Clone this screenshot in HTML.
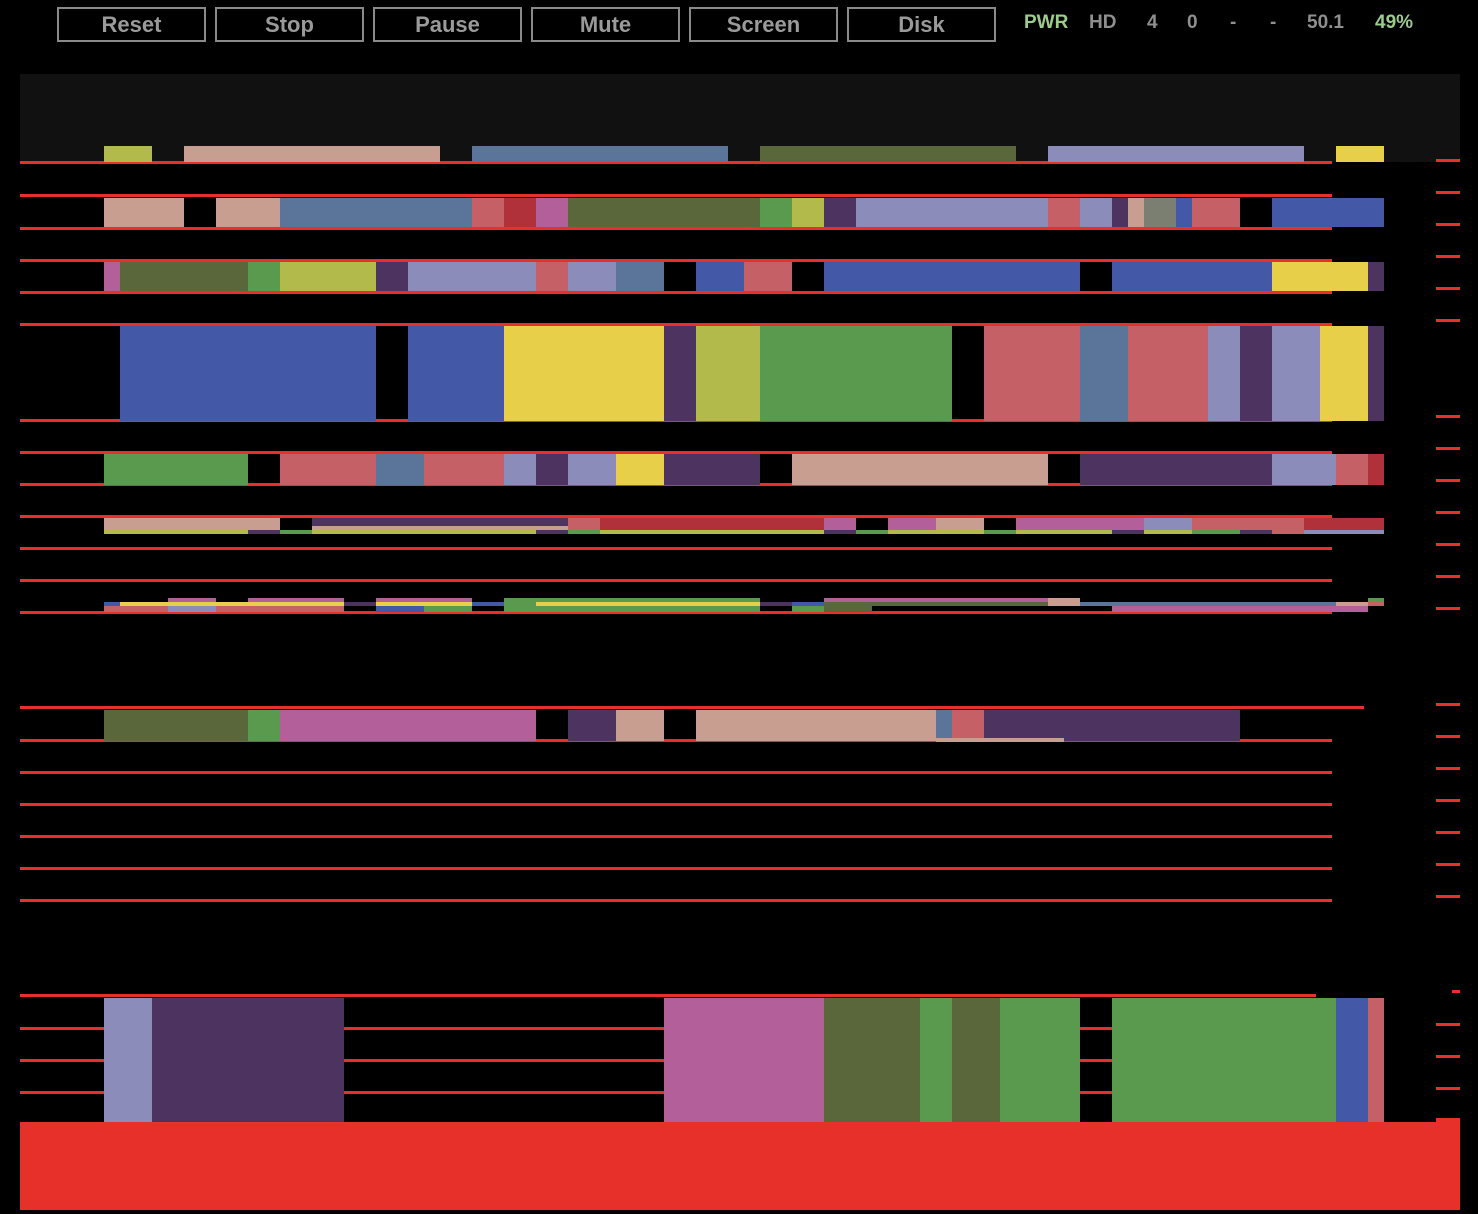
<!DOCTYPE html>
<html><head><meta charset="utf-8"><style>
html,body{margin:0;padding:0;background:#000;width:1478px;height:1214px;overflow:hidden;position:relative;font-family:"Liberation Sans",sans-serif}
.b{position:absolute;top:7px;height:31px;width:145px;border:2px solid #8a8a8a;color:#9a9a9a;font-weight:bold;font-size:22px;line-height:31px;text-align:center}
.s{position:absolute;top:12px;font-weight:bold;font-size:19px;color:#8f8f8f}
.g{color:#9ccc8c}
#p{position:absolute;left:20px;top:74px;width:1440px;height:88px;background:#111}
div.r{position:absolute}
</style></head><body>
<div class="b" style="left:57px">Reset</div>
<div class="b" style="left:215px">Stop</div>
<div class="b" style="left:373px">Pause</div>
<div class="b" style="left:531px">Mute</div>
<div class="b" style="left:689px">Screen</div>
<div class="b" style="left:847px">Disk</div>
<span class="s g" style="left:1024px">PWR</span>
<span class="s" style="left:1089px">HD</span>
<span class="s" style="left:1147px">4</span>
<span class="s" style="left:1187px">0</span>
<span class="s" style="left:1230px">-</span>
<span class="s" style="left:1270px">-</span>
<span class="s" style="left:1307px">50.1</span>
<span class="s g" style="left:1375px">49%</span>
<div id="p"></div>
<div id="c"></div>
<script>
var C={yg:'#b3ba4c',sa:'#c89e90',st:'#5a7599',ol:'#59673a',la:'#8c8cba',ye:'#e8cf4a',sr:'#c46066',dr:'#b0313a',pk:'#b35f9a',gr:'#5a9a4e',pu:'#4d3360',bl:'#4358a6',gy:'#7a7f72',rd:'#e8302a'};
var h='';
function R(x1,x2,y1,y2,c){h+='<div class="r" style="left:'+x1+'px;width:'+(x2-x1)+'px;top:'+y1+'px;height:'+(y2-y1)+'px;background:'+(C[c]||c)+'"></div>';}
// left lines
[162,195,228,260,292,324,420,452,484,516,548,580,612,740,772,804,836,868,900,1028,1060,1092].forEach(function(y){R(20,1332,y-1,y+2,'rd')});
R(20,1364,706,709,'rd');R(20,1316,994,997,'rd');
// right ticks
[160,192,224,256,288,320,416,448,480,512,544,576,608,704,736,768,800,832,864,896,1024,1056,1088].forEach(function(y){R(1436,1460,y-1,y+2,'rd')});
R(1452,1460,990,993,'rd');
function row(y1,y2,a){a.forEach(function(s){R(s[0],s[1],y1,y2,s[2])})}
row(146,162,[[104,152,'yg'],[184,440,'sa'],[472,728,'st'],[760,1016,'ol'],[1048,1304,'la'],[1336,1384,'ye']]);
row(198,227,[[104,184,'sa'],[216,280,'sa'],[280,472,'st'],[472,504,'sr'],[504,536,'dr'],[536,568,'pk'],[568,760,'ol'],[760,792,'gr'],[792,824,'yg'],[824,856,'pu'],[856,1048,'la'],[1048,1080,'sr'],[1080,1112,'la'],[1112,1128,'pu'],[1128,1144,'sa'],[1144,1176,'gy'],[1176,1192,'bl'],[1192,1240,'sr'],[1272,1384,'bl']]);
row(262,291,[[104,120,'pk'],[120,248,'ol'],[248,280,'gr'],[280,376,'yg'],[376,408,'pu'],[408,536,'la'],[536,568,'sr'],[568,616,'la'],[616,664,'st'],[696,744,'bl'],[744,792,'sr'],[824,1080,'bl'],[1112,1272,'bl'],[1272,1368,'ye'],[1368,1384,'pu']]);
row(326,421,[[120,376,'bl'],[408,504,'bl'],[504,664,'ye'],[664,696,'pu'],[696,760,'yg'],[760,952,'gr'],[984,1080,'sr'],[1080,1128,'st'],[1128,1208,'sr'],[1208,1240,'la'],[1240,1272,'pu'],[1272,1320,'la'],[1320,1368,'ye'],[1368,1384,'pu']]);
row(454,485,[[104,248,'gr'],[280,376,'sr'],[376,424,'st'],[424,504,'sr'],[504,536,'la'],[536,568,'pu'],[568,616,'la'],[616,664,'ye'],[664,760,'pu'],[792,1048,'sa'],[1080,1272,'pu'],[1272,1336,'la'],[1336,1368,'sr'],[1368,1384,'dr']]);
row(518,530,[[104,280,'sa'],[568,600,'sr'],[600,824,'dr'],[824,856,'pk'],[888,936,'pk'],[936,984,'sa'],[1016,1144,'pk'],[1144,1192,'la'],[1192,1304,'sr'],[1304,1384,'dr']]);
row(518,526,[[312,568,'pu']]);row(526,530,[[312,568,'sa']]);
row(530,534,[[104,248,'yg'],[248,280,'pu'],[280,312,'gr'],[312,536,'yg'],[536,568,'pu'],[568,600,'gr'],[600,824,'yg'],[824,856,'pu'],[856,888,'gr'],[888,984,'yg'],[984,1016,'gr'],[1016,1112,'yg'],[1112,1144,'pu'],[1144,1192,'yg'],[1192,1240,'gr'],[1240,1272,'pu'],[1272,1304,'sr'],[1304,1384,'la']]);
row(598,602,[[168,216,'pk'],[248,344,'pk'],[376,472,'pk'],[504,760,'gr'],[824,1048,'pk'],[1048,1080,'sa'],[1368,1384,'gr']]);
row(602,606,[[104,120,'bl'],[120,344,'ye'],[344,376,'pu'],[376,472,'ye'],[472,504,'bl'],[504,536,'gr'],[536,760,'ye'],[760,792,'pu'],[792,824,'bl'],[824,1048,'ol'],[1048,1080,'sa'],[1080,1336,'st'],[1336,1368,'sa'],[1368,1384,'sr']]);
row(606,612,[[104,168,'sr'],[168,216,'la'],[216,344,'sr'],[376,424,'bl'],[424,472,'gr'],[504,760,'gr'],[792,824,'gr'],[824,872,'ol'],[1112,1368,'pk']]);
row(710,741,[[104,248,'ol'],[248,280,'gr'],[280,536,'pk'],[568,616,'pu'],[616,664,'sa'],[696,936,'sa'],[936,952,'st'],[952,984,'sr'],[984,1240,'pu']]);
row(738,742,[[936,1064,'sa']]);
row(998,1126,[[104,152,'la'],[152,344,'pu'],[664,824,'pk'],[824,920,'ol'],[920,952,'gr'],[952,1000,'ol'],[1000,1080,'gr'],[1112,1336,'gr'],[1336,1368,'bl'],[1368,1384,'sr']]);
R(20,1460,1122,1210,'rd');R(1436,1460,1118,1122,'rd');
document.getElementById('c').innerHTML=h;
</script>
</body></html>
